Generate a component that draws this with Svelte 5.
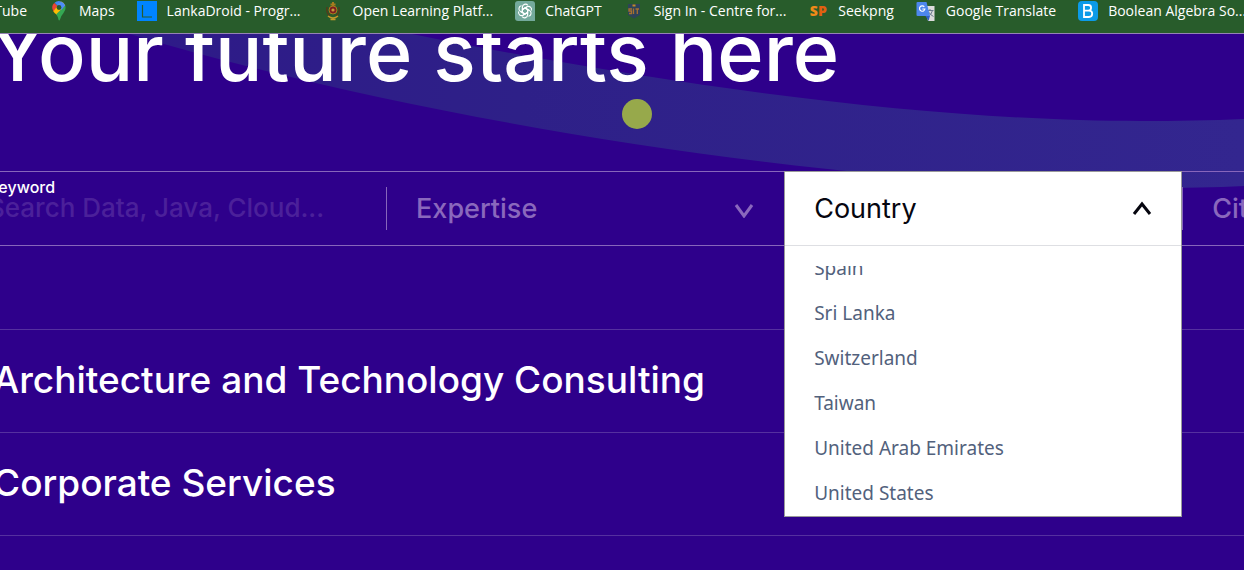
<script>
  const countries = ['Spain', 'Sri Lanka', 'Switzerland', 'Taiwan', 'United Arab Emirates', 'United States'];
  const areas = ['Architecture and Technology Consulting', 'Corporate Services'];
</script>

<div class="page">
  <nav class="bookmarks" aria-label="Bookmarks">
    <a class="tube" href="#tube">YouTube</a>
    <a href="#maps">
      <svg width="20" height="20" viewBox="0 0 20 20">
        <path d="M5.500 1.800A6.800 6.800 0 0 1 12 .4L8.700 5z" fill="#4285f4" />
        <path d="M5.300 2 9 5.200 4.500 10.500Q1.500 5.500 5.300 2z" fill="#ea4335" />
        <path d="M12 .4Q15.200 1.500 16.200 4.500L8 14Q5.500 12.500 4.300 10.200z" fill="#fbbc04" />
        <path d="M16.200 4.500Q17.500 8.500 14.500 12 11.500 15.500 11 18.500q-.8 2-1.600 0Q9 15.500 7.200 13.200z" fill="#34a853" />
        <path d="M12 .4Q15 1.500 16.200 4.500L12.300 9 8 4.800z" fill="#4b8df8" />
        <circle cx="10" cy="6.500" r="2.400" fill="#285c2b" />
      </svg>
      Maps
    </a>
    <a href="#lankadroid">
      <svg width="20" height="20" viewBox="0 0 20 20">
        <path fill="#0084ff" d="M0 0h20v20H0z" />
        <path d="M5.500 4v12H15" fill="none" stroke="#285c2b" stroke-width="1.200" />
      </svg>
      LankaDroid - Progr...
    </a>
    <a href="#open-learning">
      <svg width="20" height="20" viewBox="0 0 20 20">
        <path d="M10 1v4M7.500 3.500h5" stroke="#a67c1e" stroke-width="2" />
        <circle cx="10" cy="9" r="4" fill="#7d2020" stroke="#a67c1e" />
        <circle cx="10" cy="9" r="1.600" fill="#c49a3a" />
        <path d="M4 6q-1 6 3 9M16 6q1 6-3 9" stroke="#513d1c" fill="none" stroke-width="1.500" />
        <path d="M5 15q5 4 10 0M7.500 18.500h5" stroke="#c09a2a" fill="none" stroke-width="1.500" />
      </svg>
      Open Learning Platf...
    </a>
    <a href="#chatgpt">
      <svg width="20" height="20" viewBox="0 0 20 20">
        <path d="M3 0h14q3 0 3 3v17H3q-3 0-3-3V3q0-3 3-3z" fill="#74aa9c" />
        <g fill="none" stroke="#fff" stroke-width="1.100">
          {#each [0, 60, 120, 180, 240, 300] as turn}
            <path transform="rotate({turn} 10 10)" d="M7.400 11.500V6.200a3 3 0 0 1 5.400-1.800M7.400 8.500 10 7l4.500 2.600" />
          {/each}
        </g>
      </svg>
      ChatGPT
    </a>
    <a href="#sign-in">
      <svg width="20" height="20" viewBox="0 0 20 20">
        <path d="M4 3h12v11l-6 3.500L4 14z" fill="#2d4358" />
        <path d="M8.500 4.500h3" stroke="#c28a28" stroke-width="2" />
        <path d="M8 8H5v2h2.500v2.500H5M9.500 7.500v5.500M11.500 8H15M13.300 8v5" fill="none" stroke="#a67030" stroke-width="1.300" />
      </svg>
      Sign In - Centre for...
    </a>
    <a href="#seekpng"><span class="sp">S<b>P</b></span>Seekpng</a>
    <a href="#translate">
      <svg width="20" height="20" viewBox="0 0 20 20">
        <path d="M8 5h10.500v15H12z" fill="#dcdcdc" />
        <path d="M10.500 9.500h7M14 8v1.500M16.500 9.500q-1 4-4.500 6M12.500 11q2 3 5 4.500" stroke="#6b7b8c" fill="none" />
        <path d="M1.500 1h9L14 15H1.500Q.5 15 .5 14V2Q.5 1 1.500 1z" fill="#4d87ed" />
        <path d="M8.300 5.800a2.700 2.700 0 1 0 .6 2.200H6.300" stroke="#fff" stroke-width="1.200" fill="none" />
        <path d="m9.500 15 3 5 1.500-5z" fill="#2f5fc4" />
      </svg>
      Google Translate
    </a>
    <a href="#boolean">
      <svg width="20" height="20" viewBox="0 0 20 20">
        <rect width="20" height="20" rx="4" fill="#0c9be8" />
        <path d="M6 4v12h5a3.200 3.200 0 0 0 0-6.400H6h4.300a2.800 2.800 0 0 0 0-5.600z" fill="none" stroke="#fff" stroke-width="1.800" />
      </svg>
      Boolean Algebra So...
    </a>
  </nav>

  <main>
    <svg class="band" viewBox="0 0 1244 160" preserveAspectRatio="none" aria-hidden="true">
      <defs>
        <linearGradient id="bandfill"><stop offset="0" stop-color="#2e1a88" /><stop offset=".35" stop-color="#2e2088" /><stop offset="1" stop-color="#33268f" /></linearGradient>
      </defs>
      <path fill="url(#bandfill)" d="M130 0C430 90 850 154 1150 154Q1200 154 1244 152V85Q1195 87 1140 87C950 87 700 58 412 0z" />
    </svg>

    <h1>Your future starts here</h1>
    <div class="marker"></div>

    <form class="filters">
      <div class="field keyword">
        <label for="keyword">Keyword</label>
        <input id="keyword" placeholder="Search Data, Java, Cloud..." />
      </div>
      <div class="field">
        <button type="button" class="trigger">
          Expertise
          <svg width="20" height="18" viewBox="0 0 20 18"><path d="m2 5 8 11 8-11" /></svg>
        </button>
      </div>
      <div class="field">
        <div class="dropdown">
          <button type="button" class="trigger" aria-expanded="true">
            Country
            <svg width="20" height="18" viewBox="0 0 20 18"><path d="m2 14 8-10 8 10" /></svg>
          </button>
          <div class="panel">
            <ul role="listbox" aria-label="Country">
              {#each countries as country}
                <li role="option" aria-selected="false">{country}</li>
              {/each}
            </ul>
          </div>
        </div>
      </div>
      <div class="field">
        <button type="button" class="trigger">City</button>
      </div>
    </form>

    <section class="areas">
      {#each areas as area}
        <h2>{area}</h2>
      {/each}
    </section>
  </main>
</div>

<style>
  :global(body) { margin: 0; background: #2e008b; }
  .page { height: 100vh; overflow: hidden; background: #2e008b; color: #fff; font-family: Inter, sans-serif; }
  .bookmarks { box-sizing: border-box; height: 34px; border-bottom: 1px solid #9583b5; background: #285c2b; display: flex; gap: 22px; padding-bottom: 11px; overflow: hidden; font: 14px/22px "Open Sans", sans-serif; }
  .bookmarks a { display: flex; flex: none; align-items: center; gap: 10px; color: #fff; text-decoration: none; white-space: nowrap; }
  .bookmarks a.tube { width: 27px; justify-content: flex-end; }
  .sp { width: 20px; color: #f08a18; font-weight: 800; font-size: 14px; text-align: center; }
  .sp b { color: #e2600f; font-weight: 800; }
  main { position: relative; }
  .band { position: absolute; top: 0; left: 0; width: 100%; height: 160px; }
  h1 { position: relative; height: 65px; margin: 0 0 0 -10px; line-height: 36px; font-size: 79px; font-weight: 500; white-space: nowrap; overflow: hidden; }
  .marker { position: relative; width: 30px; height: 30px; margin-left: 50%; border-radius: 50%; background: #97a94b; }
  .filters { position: relative; z-index: 1; display: grid; grid-template-columns: repeat(4, 32%); margin: 42px 0 0; border: solid #8766bb; border-width: 1px 0; }
  .field { position: relative; left: -12px; height: 73px; }
  .field + .field::before { content: ""; position: absolute; left: 0; top: 15px; height: 43px; border-left: 1px solid #8766bb; }
  .keyword { display: flex; flex-direction: column; padding: 8px 0 0; box-sizing: border-box; }
  label { font-size: 16px; line-height: 14px; font-weight: 500; }
  input { width: 90%; height: 28px; padding: 0; border: 0; outline: 0; background: none; font: 500 26px/28px Inter, sans-serif; }
  input::placeholder { color: #4b209a; opacity: 1; }
  .trigger { display: flex; width: 100%; height: 73px; align-items: center; justify-content: space-between; padding: 0 30px; border: 0; background: none; color: #8a68bd; font: 500 27px/32px Inter, sans-serif; }
  .trigger svg { fill: none; stroke: currentColor; stroke-width: 3; }
  .dropdown { position: absolute; top: -1px; left: 0; right: 0; box-sizing: border-box; border: 1px solid #9a9a9a; background: #fff; }
  .dropdown .trigger { padding: 0 29px; color: #06060f; font-weight: 400; }
  .panel { padding-top: 20px; border-top: 1px solid #dedfe3; }
  ul { display: flex; flex-direction: column; justify-content: flex-end; height: 250px; margin: 0; padding: 0 29px; overflow: hidden; list-style: none; color: #52617c; font: 19px/45px "Noto Sans", sans-serif; }
  .areas { padding-top: 83px; }
  h2 { margin: 0 0 0 -7px; height: 102px; border-top: 1px solid #55309f; font-size: 37px; line-height: 100px; font-weight: 500; white-space: nowrap; }
  h2:last-child { border-bottom: 1px solid #55309f; }
</style>
